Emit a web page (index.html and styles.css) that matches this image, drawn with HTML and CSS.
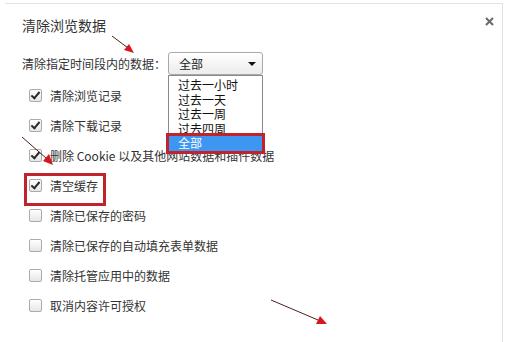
FILE: index.html
```html
<!DOCTYPE html>
<html lang="zh-CN">

<head>
    <meta charset="utf-8" />
    <title>清除浏览数据</title>
    <link rel="stylesheet" href="styles.css">
</head>

<body>
    <div class="dialog">
        <div class="head">
            <h1 class="title">清除浏览数据</h1>
            <svg class="close" width="9" height="9" viewBox="0 0 9 9">
                <path d="M1 1 L8 8 M8 1 L1 8" stroke="#6a6a6a" stroke-width="2" />
            </svg>
        </div>

        <div class="range">
            <span class="range-label">清除指定时间段内的数据：</span>
            <div class="select">
                <span>全部</span>
                <span class="caret"></span>
                <ul class="options">
                    <li>过去一小时</li>
                    <li>过去一天</li>
                    <li>过去一周</li>
                    <li>过去四周</li>
                    <li class="picked">全部</li>
                </ul>
            </div>
        </div>

        <ul class="items">
            <li class="item"><span class="box on"></span>清除浏览记录</li>
            <li class="item"><span class="box on"></span>清除下载记录</li>
            <li class="item"><span class="box on"></span>删除 Cookie 以及其他网站数据和插件数据</li>
            <li class="item"><span class="box on"></span>清空缓存</li>
            <li class="item"><span class="box"></span>清除已保存的密码</li>
            <li class="item"><span class="box"></span>清除已保存的自动填充表单数据</li>
            <li class="item"><span class="box"></span>清除托管应用中的数据</li>
            <li class="item"><span class="box"></span>取消内容许可授权</li>
        </ul>
    </div>

    <!-- hand drawn notes on top of the screenshot -->
    <svg class="marks" width="505" height="342" viewBox="0 0 505 342">
        <rect x="25.5" y="174.5" width="79" height="30" fill="none" stroke="#c0232b" stroke-width="3" />
        <path d="M112 36 L128 48" stroke="#4a2020" stroke-width="1" />
        <path d="M134 53 L124 50 L129 44 Z" fill="#d8141c" />
        <path d="M22 137 L46 158" stroke="#4a2020" stroke-width="1" />
        <path d="M53 165 L43 161 L49 154 Z" fill="#d8141c" />
        <path d="M271 300 L318 320" stroke="#4a2020" stroke-width="1" />
        <path d="M327 324 L316 324 L320 316 Z" fill="#d8141c" />
    </svg>
</body>

</html>
```

FILE: styles.css
```css
html {
    padding: 0;
    margin: 0;
    font-family: "Noto Sans CJK SC", "Liberation Sans", sans-serif;
    color: #333;
}

body {
    position: relative;
    overflow: hidden;
    margin: 0;
    width: 505px;
    height: 342px;
    background: #fff;
}

.dialog {
    box-sizing: border-box;
    margin: 3px 2px 0 5px;
    height: 339px;
    padding: 10px 0 0 17px;
    border-top: 1px solid #e2e2e2;
    border-right: 1px solid #e2e2e2;
}

.head {
    display: flex;
    justify-content: space-between;
    align-items: flex-start;
    padding-right: 8px;
}

.title {
    margin: 0;
    font-size: 14px;
    font-weight: normal;
    line-height: 22px;
    color: #333;
}

.close {
    margin-top: 3px;
}

.range {
    display: flex;
    align-items: center;
    gap: 2px;
    margin-top: 16px;
    font-size: 12px;
}

.range-label {
    width: 144px;
    line-height: 16px;
}

.select {
    position: relative;
    box-sizing: border-box;
    display: flex;
    align-items: center;
    justify-content: space-between;
    width: 95px;
    height: 23px;
    padding: 0 6px 0 10px;
    border: 1px solid #a9a9a9;
    border-radius: 3px;
    background: linear-gradient(#ffffff, #ececec);
    color: #222;
}

.caret {
    width: 0;
    height: 0;
    border-left: 4px solid transparent;
    border-right: 4px solid transparent;
    border-top: 4px solid #111;
}

.options {
    position: absolute;
    top: 22px;
    left: -1px;
    box-sizing: border-box;
    width: 95px;
    margin: 0;
    padding: 2px 0 0;
    list-style: none;
    background: #fff;
    border: 1px solid #8a8a8a;
    z-index: 2;
}

.options li {
    padding-left: 9px;
    line-height: 14.5px;
    color: #111;
}

.options .picked {
    background: #3d96f2;
    color: #fff;
    outline: 3px solid #c0232b;
    margin-bottom: 2px;
}

.items {
    margin: 5px 0 0;
    padding: 0 0 0 7px;
    list-style: none;
}

.item {
    display: flex;
    align-items: center;
    gap: 8px;
    height: 30px;
    font-size: 12px;
    color: #333;
}

.box {
    position: relative;
    box-sizing: border-box;
    width: 13px;
    height: 13px;
    border: 1px solid #ababab;
    border-radius: 2px;
    background: linear-gradient(#ffffff, #e6e6e6);
}

.box.on::after {
    content: "";
    position: absolute;
    left: 3px;
    top: 0px;
    width: 3px;
    height: 7px;
    border-right: 2px solid #2b2b2b;
    border-bottom: 2px solid #2b2b2b;
    transform: rotate(40deg);
}

.marks {
    position: absolute;
    top: 0;
    left: 0;
    pointer-events: none;
}
```
